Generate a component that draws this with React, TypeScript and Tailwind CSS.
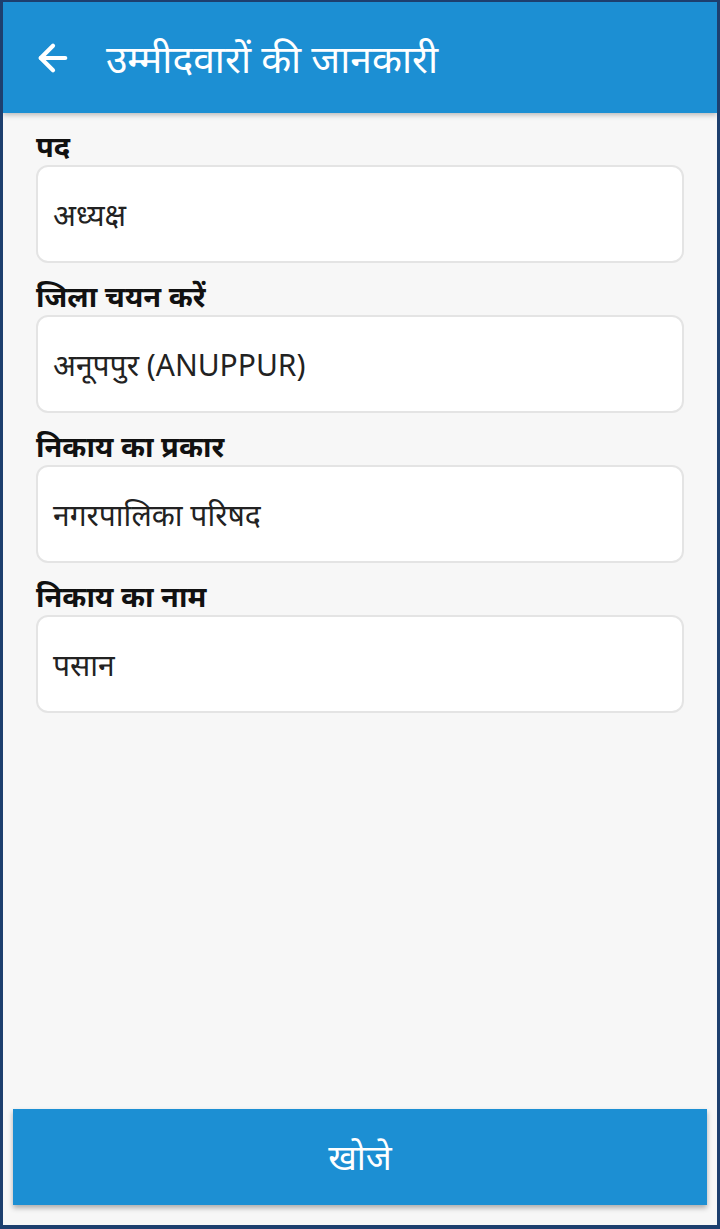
import { ArrowLeft } from 'lucide-react';

const fields = [
  { label: 'पद', value: 'अध्यक्ष' },
  { label: 'जिला चयन करें', value: 'अनूपपुर (ANUPPUR)' },
  { label: 'निकाय का प्रकार', value: 'नगरपालिका परिषद' },
  { label: 'निकाय का नाम', value: 'पसान' },
];

export default function App() {
  return (
    <div
      className="flex h-[1229px] w-[720px] flex-col overflow-hidden border-x-[3px] border-t-2 border-b-[4px] border-[#1d3f6e] bg-[#f7f7f7]"
      style={{ fontFamily: '"Noto Sans", "Noto Sans Devanagari", sans-serif' }}
    >
      {/* Toolbar */}
      <div className="relative z-10 flex h-[111px] shrink-0 items-center bg-[#1c8fd3] pl-[29px] pr-[30px] shadow-[0_2px_5px_rgba(0,0,0,0.25)]">
        <ArrowLeft className="h-[42px] w-[42px] text-white" strokeWidth={2.4} />
        <h1 className="ml-[32px] text-[39px] leading-none text-white">उम्मीदवारों की जानकारी</h1>
      </div>

      {/* Form */}
      <div className="flex flex-1 flex-col px-[33px] pt-[18px]">
        {fields.map((f) => (
          <div key={f.label} className="mb-[18px] flex flex-col">
            <label className="h-[34px] text-[29px] font-bold leading-[30px] text-[#111]">{f.label}</label>
            <div className="flex h-[98px] items-center rounded-[12px] border-2 border-[#e4e4e4] bg-white px-[15px]">
              <span className="text-[30px] text-[#222]">{f.value}</span>
            </div>
          </div>
        ))}
      </div>

      {/* Search button */}
      <div className="px-[10px] pb-[20px]">
        <button className="flex h-[96px] w-full items-center justify-center bg-[#1c8fd3] text-[35px] text-white shadow-[0_3px_5px_rgba(0,0,0,0.3)]">
          खोजे
        </button>
      </div>
    </div>
  );
}
